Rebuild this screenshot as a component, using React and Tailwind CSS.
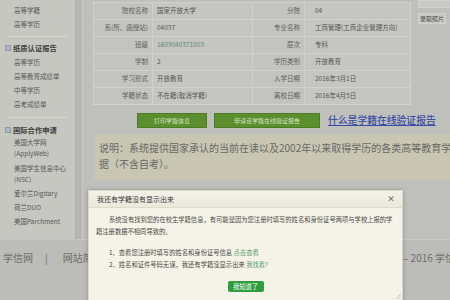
const font = { fontFamily: '"Noto Sans CJK SC", "Noto Sans", sans-serif' };

const Item = ({ children }) => (
  <div className="h-[14px] pl-[14px] text-[6.5px] leading-[14px] text-[#575755] whitespace-nowrap">{children}</div>
);

const Header = ({ children, className = '' }) => (
  <div className={`flex h-[14px] items-center gap-[2px] pl-[5px] ${className}`}>
    <span className="h-[6px] w-[6px] border border-[#8e9ca6] bg-[#a9b8c3]" />
    <span className="text-[7.3px] font-bold leading-[14px] text-[#3f403e]">{children}</span>
  </div>
);

const rows = [
  ['院校名称', '国家开放大学', '分院', '04'],
  ['系(所、函授站)', '04037', '专业名称', '工商管理(工商企业管理方向)'],
  ['班级', '1603040371003', '层次', '专科'],
  ['学制', '2', '学历类别', '开放教育'],
  ['学习形式', '开放教育', '入学日期', '2016年3月1日'],
  ['学籍状态', '不在籍(取消学籍)', '离校日期', '2016年4月5日'],
];

export default function App() {
  return (
    <div className="relative h-[300px] w-[450px] overflow-hidden bg-[#bcbcb8]" style={font}>
      {/* page body */}
      <div className="flex h-[240px] border-b border-[#c8c8c4]">
        <aside className="w-[76px] shrink-0 border-r border-[#afb1aa] bg-[#c5c7c0] pt-[3px]">
          <Item>高等学籍</Item>
          <Item>高等学历</Item>
          <div className="mx-[8px] mt-[5px] border-t border-[#d6d8d1]" />
          <Header className="mt-[4px]">纸质认证报告</Header>
          <Item>高等学历</Item>
          <Item>高等教育成绩单</Item>
          <Item>中等学历</Item>
          <Item>高考成绩单</Item>
          <div className="mx-[8px] mt-[6px] border-t border-[#d6d8d1]" />
          <Header className="mt-[5px]">国际合作申请</Header>
          <div className="pl-[14px] text-[6.5px] leading-[11px] text-[#575755]">
            <div>美国大学网</div>
            <div>(ApplyWeb)</div>
          </div>
          <div className="mt-[4px] pl-[14px] text-[6.5px] leading-[11px] text-[#575755]">
            <div>美国学生信息中心</div>
            <div>(NSC)</div>
          </div>
          <div className="mt-[1px]">
            <Item>爱尔兰Digitary</Item>
            <Item>荷兰DUO</Item>
            <Item>美国Parchment</Item>
          </div>
        </aside>
        <div className="w-[6px] shrink-0 bg-[#b6b7b3]" />
        <main className="flex-1 border-l border-[#cacac6] bg-[#bfbfbb]">
          <div className="flex">
            <table className="ml-[10px] mt-[2px] w-[318px] border-collapse text-[6.5px] text-[#555553]">
              <tbody>
                {rows.map((r) => (
                  <tr key={r[0]} className="h-[17px]">
                    <td className="w-[59px] border border-[#d0d0cc] bg-[#c3c3bf] pr-[4px] text-right text-[#5e5e5c] whitespace-nowrap">{r[0]}</td>
                    <td className={`w-[100px] border border-[#d0d0cc] bg-[#c5c5c1] pl-[4px] ${r[0] === '班级' ? 'text-[#5e8a73]' : ''}`}>{r[1]}</td>
                    <td className="w-[52px] border border-[#d0d0cc] bg-[#c3c3bf] pr-[4px] text-right text-[#5e5e5c] whitespace-nowrap">{r[2]}</td>
                    <td className="border border-[#d0d0cc] bg-[#c5c5c1] pl-[10px] whitespace-nowrap">{r[3]}</td>
                  </tr>
                ))}
              </tbody>
            </table>
            <div className="ml-[4px] flex flex-1 flex-col">
              <div className="ml-[3px] h-[8px] border border-[#d2d2ce] bg-[#c9c9c5]" />
              <div className="ml-[3px] mt-[5px] w-fit border border-[#d0d0cc] bg-[#c8c8c4] px-[1px] text-[6px] leading-[9px] text-[#4b4b49]">录取照片</div>
            </div>
          </div>

          <div className="ml-[54px] mt-[8px] flex items-center">
            <div className="flex h-[15px] w-[70px] items-center justify-center border border-[#4d7b26] bg-[#5b8e2d] text-[6px] text-[#d6e4c6]">打印学籍信息</div>
            <div className="ml-[7px] flex h-[15px] w-[106px] items-center justify-center border border-[#4d7b26] bg-[#5b8e2d] text-[6px] text-[#d6e4c6]">申请该学籍在线验证报告</div>
            <a className="ml-[8px] text-[9.8px] font-medium text-[#3b4ea3] underline whitespace-nowrap">什么是学籍在线验证报告</a>
          </div>

          <div className="ml-[11px] mt-[6px] h-[46px] bg-[#c8c5b3] pl-[5px] pt-[6px] text-[10px] leading-[16px] text-[#696965] whitespace-nowrap">
            <div>说明：系统提供国家承认的当前在读以及2002年以来取得学历的各类高等教育学历数</div>
            <div>据（不含自考）。</div>
          </div>
        </main>
      </div>

      {/* footer */}
      <footer className="flex h-[60px] pt-[10px] text-[10px] leading-[16px] text-[#6d6d6a] whitespace-nowrap">
        <div className="flex w-[403px] shrink-0">
          <span className="ml-[3px]">学信网</span>
          <span className="ml-[12px]">|</span>
          <span className="ml-[15px]">网站简介</span>
        </div>
        <span>– 2016 学信网</span>
      </footer>

      {/* dialog */}
      <div className="absolute left-[88px] top-[190px] h-[120px] w-[315px] border border-[#dcd9cc] bg-[#f5f3e8] shadow-[0_0_4px_rgba(0,0,0,0.25)]">
        <div className="flex h-[17px] items-center justify-between border-b border-[#dedbcd] bg-gradient-to-b from-[#f4f2e8] to-[#ebe9dc] pl-[8px] pr-[7px]">
          <span className="text-[7px] text-[#3a3a38]">我还有学籍没有显示出来</span>
          <span className="text-[8px] font-bold leading-none text-[#6a6a66]">×</span>
        </div>
        <div className="px-[7px] pt-[6px] text-[6.3px] leading-[11.5px] text-[#4a4a46]">
          <p className="indent-[13px]">系统没有找到您的在校生学籍信息，有可能是因为您注册时填写的姓名和身份证号两项与学校上报的学籍注册数据不相同导致的。</p>
          <div className="mt-[10px] pl-[13px] leading-[12px]">
            <div>1、查看您注册时填写的姓名和身份证号信息 <span className="text-[#5c9d68]">点击查看</span></div>
            <div>2、姓名和证件号码无误，我还有学籍没显示出来 <span className="text-[#5c9d68]">我找着?</span></div>
          </div>
          <div className="mt-[10px] flex justify-center">
            <div className="flex h-[11px] w-[36px] items-center justify-center rounded-[2px] bg-[#2f9c3e] text-[6.3px] text-white">我知道了</div>
          </div>
        </div>
        <svg className="absolute left-[306px] top-[102px]" width="6" height="6" viewBox="0 0 6 6">
          <path d="M6 1L1 6M6 3.5L3.5 6" stroke="#bdbaae" strokeWidth="0.8" />
        </svg>
      </div>
    </div>
  );
}
